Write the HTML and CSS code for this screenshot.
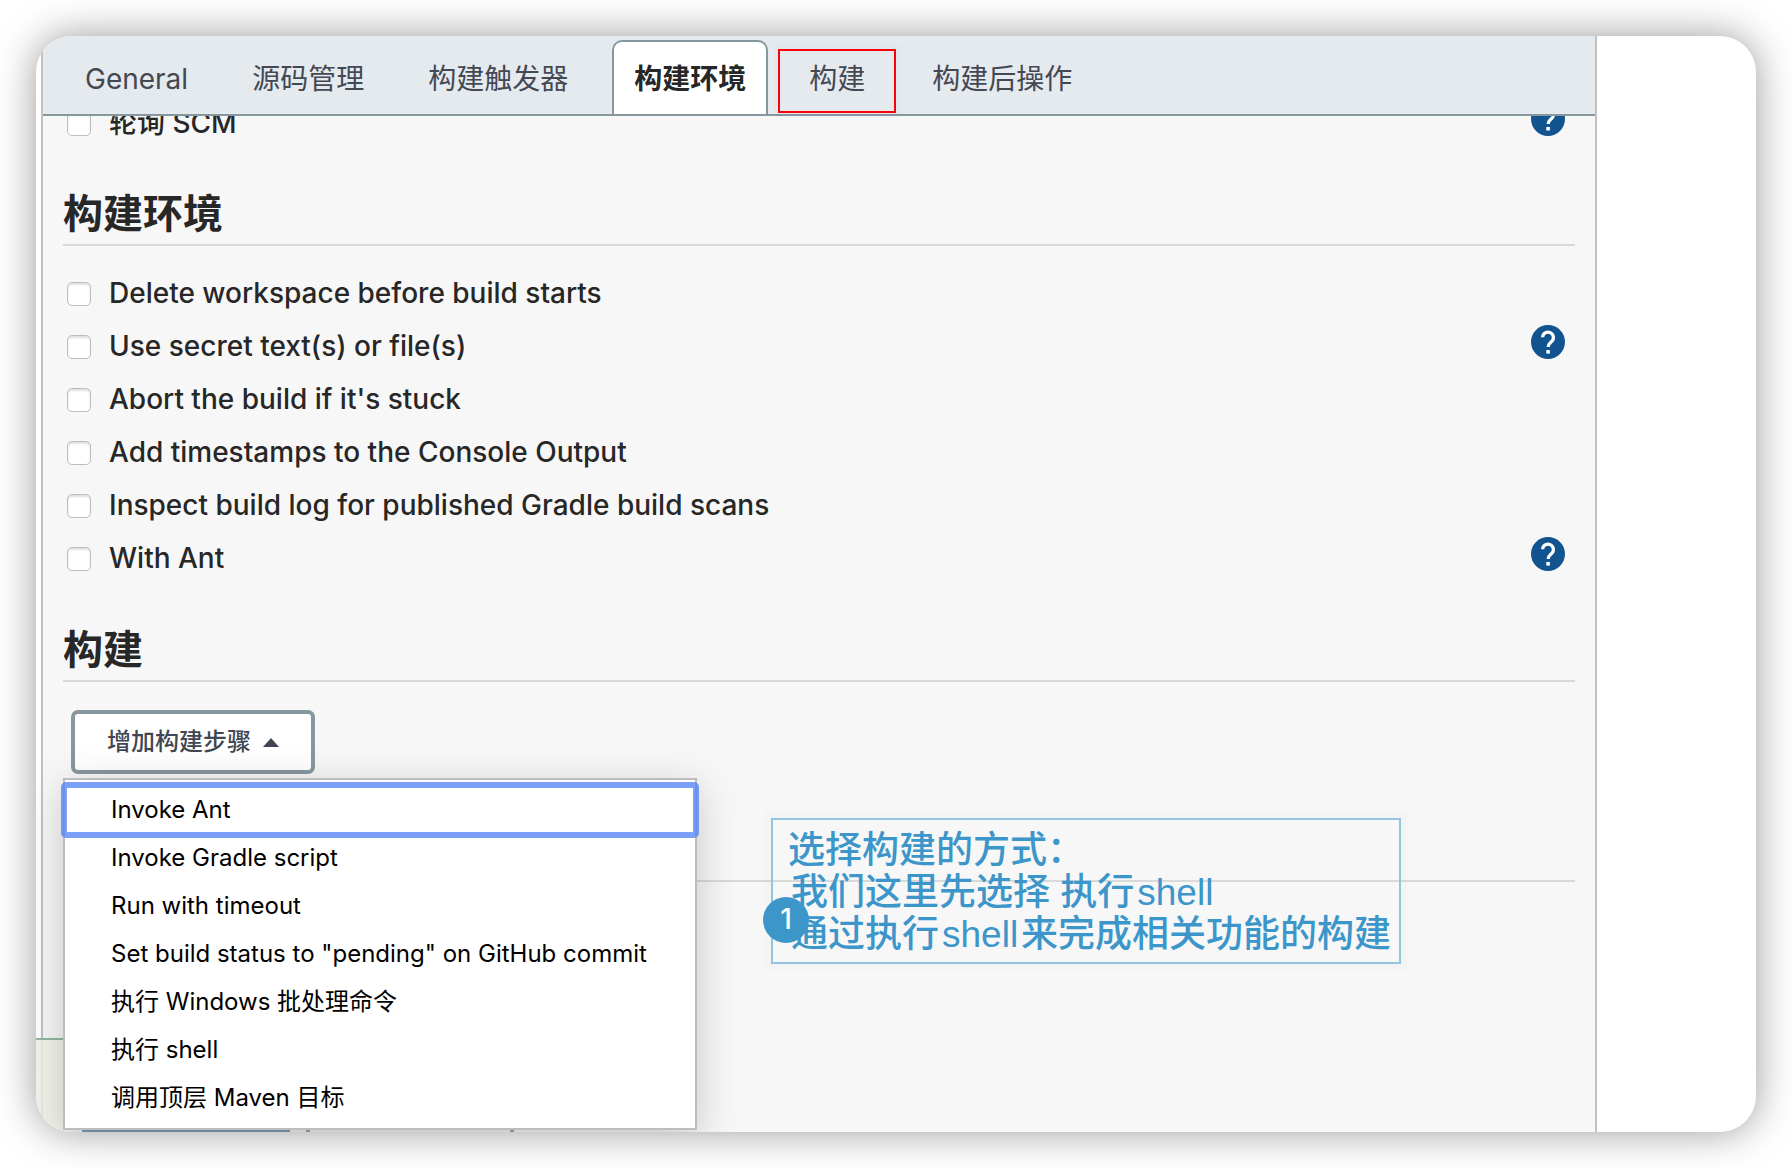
FILE: index.html
```html
<!DOCTYPE html>
<html lang="zh-CN">
<head>
<meta charset="utf-8">
<title>构建环境</title>
<link rel="stylesheet" href="styles.css">
</head>
<body>
<svg class="symbols" aria-hidden="true">
  <symbol id="help" viewBox="0 0 34 34">
    <circle cx="17" cy="17" r="17" fill="#11548f"/>
    <path d="M11.600 12.300a5.400 5.400 0 1 1 9 4.200c-2 1.800-3.400 2.500-3.400 5.500" fill="none" stroke="#fff" stroke-width="3.200"/>
    <path d="M15.300 25h3.600v3.600h-3.600z" fill="#fff"/>
  </symbol>
</svg>
<main class="window">
  <div class="config">
    <nav class="tabs">
      <a class="tab" href="#general">General</a>
      <a class="tab" href="#scm">源码管理</a>
      <a class="tab" href="#triggers">构建触发器</a>
      <a class="tab tab-active" href="#environment">构建环境</a>
      <a class="tab tab-marked" href="#build">构建</a>
      <a class="tab" href="#post">构建后操作</a>
    </nav>
    <form class="form">
      <div class="scrolled">
        <div class="option"><label><input type="checkbox">轮询 SCM</label><button type="button" class="help" aria-label="帮助"><svg><use href="#help"/></svg></button></div>
      </div>
      <section id="environment">
        <h2>构建环境</h2>
        <div class="options">
          <div class="option"><label><input type="checkbox">Delete workspace before build starts</label></div>
          <div class="option"><label><input type="checkbox">Use secret text(s) or file(s)</label><button type="button" class="help" aria-label="帮助"><svg><use href="#help"/></svg></button></div>
          <div class="option"><label><input type="checkbox">Abort the build if it's stuck</label></div>
          <div class="option"><label><input type="checkbox">Add timestamps to the Console Output</label></div>
          <div class="option"><label><input type="checkbox">Inspect build log for published Gradle build scans</label></div>
          <div class="option"><label><input type="checkbox">With Ant</label><button type="button" class="help" aria-label="帮助"><svg><use href="#help"/></svg></button></div>
        </div>
      </section>
      <section id="build">
        <h2>构建</h2>
        <div class="add-step">
          <button type="button" class="step-button">增加构建步骤<svg class="caret" viewBox="0 0 16 9"><path d="M0 9L8 0l8 9z" fill="#3f4752"/></svg></button>
          <div class="menu">
            <button type="button" class="item item-focus">Invoke Ant</button>
            <button type="button" class="item">Invoke Gradle script</button>
            <button type="button" class="item">Run with timeout</button>
            <button type="button" class="item">Set build status to "pending" on GitHub commit</button>
            <button type="button" class="item">执行 Windows 批处理命令</button>
            <button type="button" class="item">执行 shell</button>
            <button type="button" class="item">调用顶层 Maven 目标</button>
          </div>
        </div>
      </section>
      <section id="post" class="post"></section>
    </form>
  </div>
  <div class="save-bar"><span class="save-edge"></span><span class="apply-edge"></span></div>
  <aside class="note">
    <p>选择构建的方式：</p>
    <p class="note-indent">我们这里先选择 执行<span class="latin">shell</span></p>
    <p class="note-indent">通过执行<span class="latin">shell</span>来完成相关功能的构建</p>
    <span class="badge">1</span>
  </aside>
</main>
</body>
</html>
```

FILE: styles.css
```css
* { box-sizing: border-box; }

body {
  margin: 0;
  padding: 36px;
  min-height: 100vh;
  display: flex;
  background: #fff;
  color: #272727;
  font-family: Inter, "Noto Sans CJK SC", sans-serif;
  overflow: hidden;
}

.symbols { display: none; }

.window {
  position: relative;
  flex: 1;
  padding: 0 159px 0 5px;
  display: flex;
  background: #fff;
  border-radius: 36px;
  overflow: hidden;
  box-shadow: 0 0 40px rgba(0, 0, 0, .4);
}

.config {
  flex: 1;
  min-width: 0;
  display: flex;
  flex-direction: column;
  background: #f7f7f7;
  border: 0 solid #c1c1c1;
  border-width: 0 2px;
}

.tabs {
  height: 80px;
  padding: 4px 18px 0;
  display: flex;
  background: #e5eaee;
  border-bottom: 2px solid #87979f;
}

.tab {
  height: 74px;
  padding: 0 22px;
  margin-right: 16px;
  border: 2px solid transparent;
  line-height: 74px;
  font-size: 28px;
  color: #444853;
  text-decoration: none;
}

.tab-active {
  margin-left: 4px;
  margin-right: 10px;
  padding: 0 20px;
  background: #fff;
  border-color: #87979f;
  border-bottom: 0;
  border-radius: 10px 10px 0 0;
  font-weight: 700;
  color: #272727;
}

.tab-marked {
  height: 64px;
  margin: 9px 12px 0 0;
  padding: 0 29px;
  border-color: #fb0007;
  line-height: 56px;
  box-shadow: 0 0 0 4px rgba(0, 0, 0, .01);
}

.form { padding: 0 20px; }

.scrolled {
  height: 68px;
  display: flex;
  flex-direction: column;
  overflow: hidden;
}

.scrolled .option { flex: none; margin-top: -20px; }

h2 {
  margin: 0;
  border-bottom: 2px solid #d9d9d9;
  line-height: 60px;
  font-size: 40px;
}

.options { padding: 20px 0 36px; }

.option {
  height: 53px;
  padding: 0 10px 0 4px;
  display: flex;
  justify-content: space-between;
}

.option label {
  display: flex;
  align-items: center;
  gap: 18px;
  font-size: 28px;
  font-weight: 500;
  line-height: 34px;
}

input[type="checkbox"] {
  appearance: none;
  width: 24px;
  height: 24px;
  margin: 2px 0 0;
  background: #fff;
  border: 1px solid #bdbdbd;
  border-radius: 5px;
  box-shadow: inset 0 2px 2px rgba(0, 0, 0, .12);
}

.help {
  width: 34px;
  height: 34px;
  margin-top: 6px;
  padding: 0;
  border: 0;
  background: none;
}

.help svg { display: block; width: 34px; height: 34px; }

.add-step { position: relative; padding: 28px 8px 106px; }

.step-button {
  height: 64px;
  padding: 0 32px;
  display: flex;
  align-items: center;
  gap: 12px;
  background: #fff;
  border: 4px solid #87979f;
  border-radius: 7px;
  font: 500 24px/48px Inter, "Noto Sans CJK SC", sans-serif;
  color: #3f4752;
}

.caret { width: 16px; height: 9px; }

.menu {
  position: absolute;
  z-index: 2;
  top: 96px;
  left: 0;
  width: 634px;
  padding: 6px 0;
  background: #fff;
  border: 2px solid #bdbdbd;
  box-shadow: 0 10px 40px rgba(0, 0, 0, .2);
}

.item {
  display: block;
  width: 100%;
  height: 48px;
  padding: 0 46px;
  border: 0;
  background: #fff;
  color: #000;
  text-align: left;
  font: 400 24px/48px Inter, "Noto Sans CJK SC", sans-serif;
}

.item-focus {
  position: relative;
  border-radius: 1px;
  outline: 6px solid rgba(79, 128, 246, .75);
  outline-offset: -2px;
}

.post { border-bottom: 2px solid #d9d9d9; }

.save-bar {
  position: absolute;
  left: 0;
  bottom: 0;
  width: 480px;
  height: 94px;
  padding-left: 46px;
  display: flex;
  align-items: flex-end;
  gap: 16px;
  background: rgba(239, 243, 231, .8);
  border-top: 2px solid #93b8a3;
}

.save-edge { width: 208px; height: 2px; background: #7f99b5; }

.apply-edge {
  width: 208px;
  height: 2px;
  border: 0 solid #a3a3a3;
  border-width: 0 4px;
}

.note {
  position: absolute;
  z-index: 3;
  left: 735px;
  top: 782px;
  padding: 10px 8px 6px 15px;
  border: 2px solid #93c5e0;
  box-shadow: 0 0 0 6px rgba(0, 0, 0, .01);
  font: 500 37px/42px "Liberation Sans", "Noto Sans CJK SC", sans-serif;
  color: #3c96ca;
  white-space: nowrap;
}

.note p { margin: 0; }

.note-indent { padding-left: 3px; }

.latin { margin: 0 3px; }

.badge {
  position: absolute;
  left: -10px;
  top: 77px;
  width: 46px;
  height: 46px;
  border-radius: 50%;
  background: #3c96ca;
  color: #fff;
  font: 500 28px/44px Inter, sans-serif;
  text-align: center;
}
```
